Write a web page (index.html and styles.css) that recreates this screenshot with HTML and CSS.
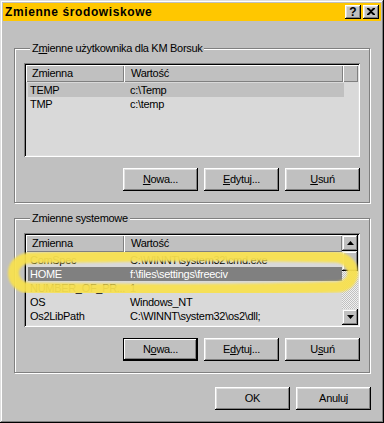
FILE: index.html
```html
<!DOCTYPE html>
<html lang="pl">
<head>
<meta charset="utf-8">
<title>Zmienne środowiskowe</title>
<link rel="stylesheet" href="styles.css">
</head>
<body>
<div class="window">
  <div class="titlebar">
    <span class="title">Zmienne środowiskowe</span>
    <div class="tbtns">
      <span class="tbtn help">?</span>
      <span class="tbtn close"><svg width="8" height="7" viewBox="0 0 8 7"><path d="M0 0h2l2 2 2-2h2v1L5 3.5 8 6v1H6L4 5 2 7H0V6l3-2.5L0 1z" fill="#000"/></svg></span>
    </div>
  </div>

  <div class="group g1">
    <div class="legend">Z<u>m</u>ienne użytkownika dla KM Borsuk</div>
    <div class="list">
      <div class="listmain">
        <div class="header">
          <div class="hcell c1">Zmienna</div>
          <div class="hcell c2">Wartość</div>
          <div class="hcell c3"></div>
        </div>
        <div class="rows">
          <div class="row inactive"><span class="col1">TEMP</span><span class="col2">c:\Temp</span></div>
          <div class="row"><span class="col1">TMP</span><span class="col2">c:\temp</span></div>
        </div>
      </div>
    </div>
    <div class="btnrow">
      <button class="btn"><u>N</u>owa...</button>
      <button class="btn"><u>E</u>dytuj...</button>
      <button class="btn"><u>U</u>suń</button>
    </div>
  </div>

  <div class="group g2">
    <div class="legend">Zmienne systemowe</div>
    <div class="list">
      <div class="listmain">
        <div class="header">
          <div class="hcell c1">Zmienna</div>
          <div class="hcell c2 grow">Wartość</div>
        </div>
        <div class="rows narrow">
          <div class="row"><span class="col1">ComSpec</span><span class="col2">C:\WINNT\system32\cmd.exe</span></div>
          <div class="row active"><span class="col1">HOME</span><span class="col2">f:\files\settings\freeciv</span></div>
          <div class="row"><span class="col1">NUMBER_OF_PR...</span><span class="col2">1</span></div>
          <div class="row"><span class="col1">OS</span><span class="col2">Windows_NT</span></div>
          <div class="row"><span class="col1">Os2LibPath</span><span class="col2">C:\WINNT\system32\os2\dll;</span></div>
        </div>
      </div>
      <div class="scrollbar">
        <div class="sb-btn"><svg width="7" height="4" viewBox="0 0 7 4"><path d="M3.5 0L7 4H0z" fill="#000"/></svg></div>
        <div class="sb-thumb"></div>
        <div class="sb-track"></div>
        <div class="sb-btn"><svg width="7" height="4" viewBox="0 0 7 4"><path d="M0 0h7L3.5 4z" fill="#000"/></svg></div>
      </div>
    </div>
    <div class="btnrow">
      <button class="btn default">N<u>o</u>wa...</button>
      <button class="btn">E<u>d</u>ytuj...</button>
      <button class="btn">U<u>s</u>uń</button>
    </div>
  </div>

  <div class="dlgbtns">
    <button class="btn">OK</button>
    <button class="btn">Anuluj</button>
  </div>

  <svg class="marker" width="384" height="423" viewBox="0 0 384 423">
    <defs><filter id="soft"><feGaussianBlur stdDeviation="0.8"/></filter></defs>
    <path d="M30 258 C120 256 250 255 335 257 C357 258 359 285 338 287 C250 290 120 290 30 288 C8 287 8 259 30 258 Z" fill="none" stroke="#f8e150" stroke-width="11" stroke-linejoin="round" opacity="0.94" filter="url(#soft)"/>
  </svg>
</div>
</body>
</html>
```

FILE: styles.css
```css
html, body {
  margin: 0;
  padding: 0;
  background: #c0c0c0;
}

body {
  font-family: "Liberation Sans", Arial, sans-serif;
  font-size: 11px;
  letter-spacing: -0.3px;
  color: #000;
}

.window {
  position: relative;
  width: 384px;
  height: 423px;
  box-sizing: border-box;
  padding: 3px;
  background: #c0c0c0;
  box-shadow: inset -1px -1px #000, inset 1px 1px #dfdfdf, inset -2px -2px #808080, inset 2px 2px #fff;
  display: flex;
  flex-direction: column;
}

.titlebar {
  height: 18px;
  flex: none;
  background: #ffc700;
  display: flex;
  align-items: center;
  justify-content: space-between;
  padding: 0 2px 0 2px;
}

.title {
  font-weight: bold;
  font-size: 12px;
  letter-spacing: 0.6px;
  line-height: 18px;
}

.tbtns {
  display: flex;
  gap: 2px;
}

.tbtn {
  width: 16px;
  height: 14px;
  box-sizing: border-box;
  background: #c0c0c0;
  box-shadow: inset -1px -1px #000, inset 1px 1px #fff, inset -2px -2px #808080, inset 2px 2px #dfdfdf;
  display: flex;
  align-items: center;
  justify-content: center;
}

.help {
  font-weight: bold;
  font-size: 12px;
  line-height: 14px;
  letter-spacing: 0;
  padding-bottom: 1px;
}

.close svg {
  display: block;
  margin-bottom: 1px;
}

.group {
  flex: none;
  width: 356px;
  box-sizing: border-box;
  margin-left: 11px;
  border: 1px solid #808080;
  box-shadow: inset 1px 1px #fff, 1px 1px #fff;
  padding: 0 9px 11px 9px;
  display: flex;
  flex-direction: column;
}

.g1 { margin-top: 27px; }
.g2 { margin-top: 15px; }

.legend {
  align-self: flex-start;
  margin: -7px 0 0 6px;
  padding: 0 2px;
  line-height: 13px;
  background: #c0c0c0;
}

.list {
  margin-top: 8px;
  height: 94px;
  box-sizing: border-box;
  padding: 2px;
  background: #d9d9d9;
  box-shadow: inset 1px 1px #808080, inset -1px -1px #fff, inset 2px 2px #000, inset -2px -2px #dfdfdf;
  display: flex;
  overflow: hidden;
}

.listmain {
  flex: 1;
  min-width: 0;
  display: flex;
  flex-direction: column;
}

.header {
  display: flex;
  height: 17px;
  flex: none;
}

.hcell {
  box-sizing: border-box;
  background: #c0c0c0;
  box-shadow: inset 1px 1px #fff, inset -1px -1px #808080;
  padding-left: 6px;
  line-height: 16px;
  white-space: nowrap;
}

.c1 { width: 98px; }
.c2 { width: 219px; padding-left: 7px; }
.c3 { flex: 1; }
.grow { flex: 1; width: auto; }

.rows {
  padding-top: 1px;
}

.row {
  display: flex;
  height: 14px;
  line-height: 14px;
  width: 316px;
  margin-left: 2px;
}

.narrow .row {
  width: 314px;
}

.col1 {
  width: 96px;
  flex: none;
  box-sizing: border-box;
  padding-left: 2px;
  white-space: nowrap;
}

.col2 {
  padding-left: 6px;
  white-space: nowrap;
}

.row.inactive {
  background: #c0c0c0;
}

.row.active {
  background: #808080;
  color: #fff;
}

.scrollbar {
  width: 16px;
  flex: none;
  display: flex;
  flex-direction: column;
}

.sb-btn {
  height: 16px;
  flex: none;
  box-sizing: border-box;
  background: #c0c0c0;
  box-shadow: inset -1px -1px #000, inset 1px 1px #dfdfdf, inset -2px -2px #808080, inset 2px 2px #fff;
  display: flex;
  align-items: center;
  justify-content: center;
}

.sb-btn svg { display: block; }

.sb-thumb {
  height: 20px;
  flex: none;
  background: #c0c0c0;
  box-shadow: inset -1px -1px #000, inset 1px 1px #dfdfdf, inset -2px -2px #808080, inset 2px 2px #fff;
}

.sb-track {
  flex: 1;
  background: repeating-conic-gradient(#c0c0c0 0 25%, #f0f0f0 0 50%) 0 0 / 2px 2px;
}

.btnrow {
  margin-top: 11px;
  display: flex;
  justify-content: flex-end;
  gap: 6px;
}

.btn {
  width: 75px;
  height: 23px;
  box-sizing: border-box;
  padding: 0;
  border: 0;
  margin: 0;
  background: #c0c0c0;
  box-shadow: inset -1px -1px #000, inset 1px 1px #fff, inset -2px -2px #808080, inset 2px 2px #dfdfdf;
  font-family: "Liberation Sans", Arial, sans-serif;
  font-size: 11px;
  letter-spacing: -0.3px;
  color: #000;
  line-height: 21px;
  text-align: center;
}

.btn.default {
  box-shadow: inset 0 0 0 1px #000, inset -2px -2px #000, inset 2px 2px #fff, inset -3px -3px #808080;
}

.dlgbtns {
  margin-top: 14px;
  margin-right: 10px;
  display: flex;
  justify-content: flex-end;
  gap: 6px;
}

.marker {
  position: absolute;
  left: 0;
  top: 0;
  pointer-events: none;
}
```
